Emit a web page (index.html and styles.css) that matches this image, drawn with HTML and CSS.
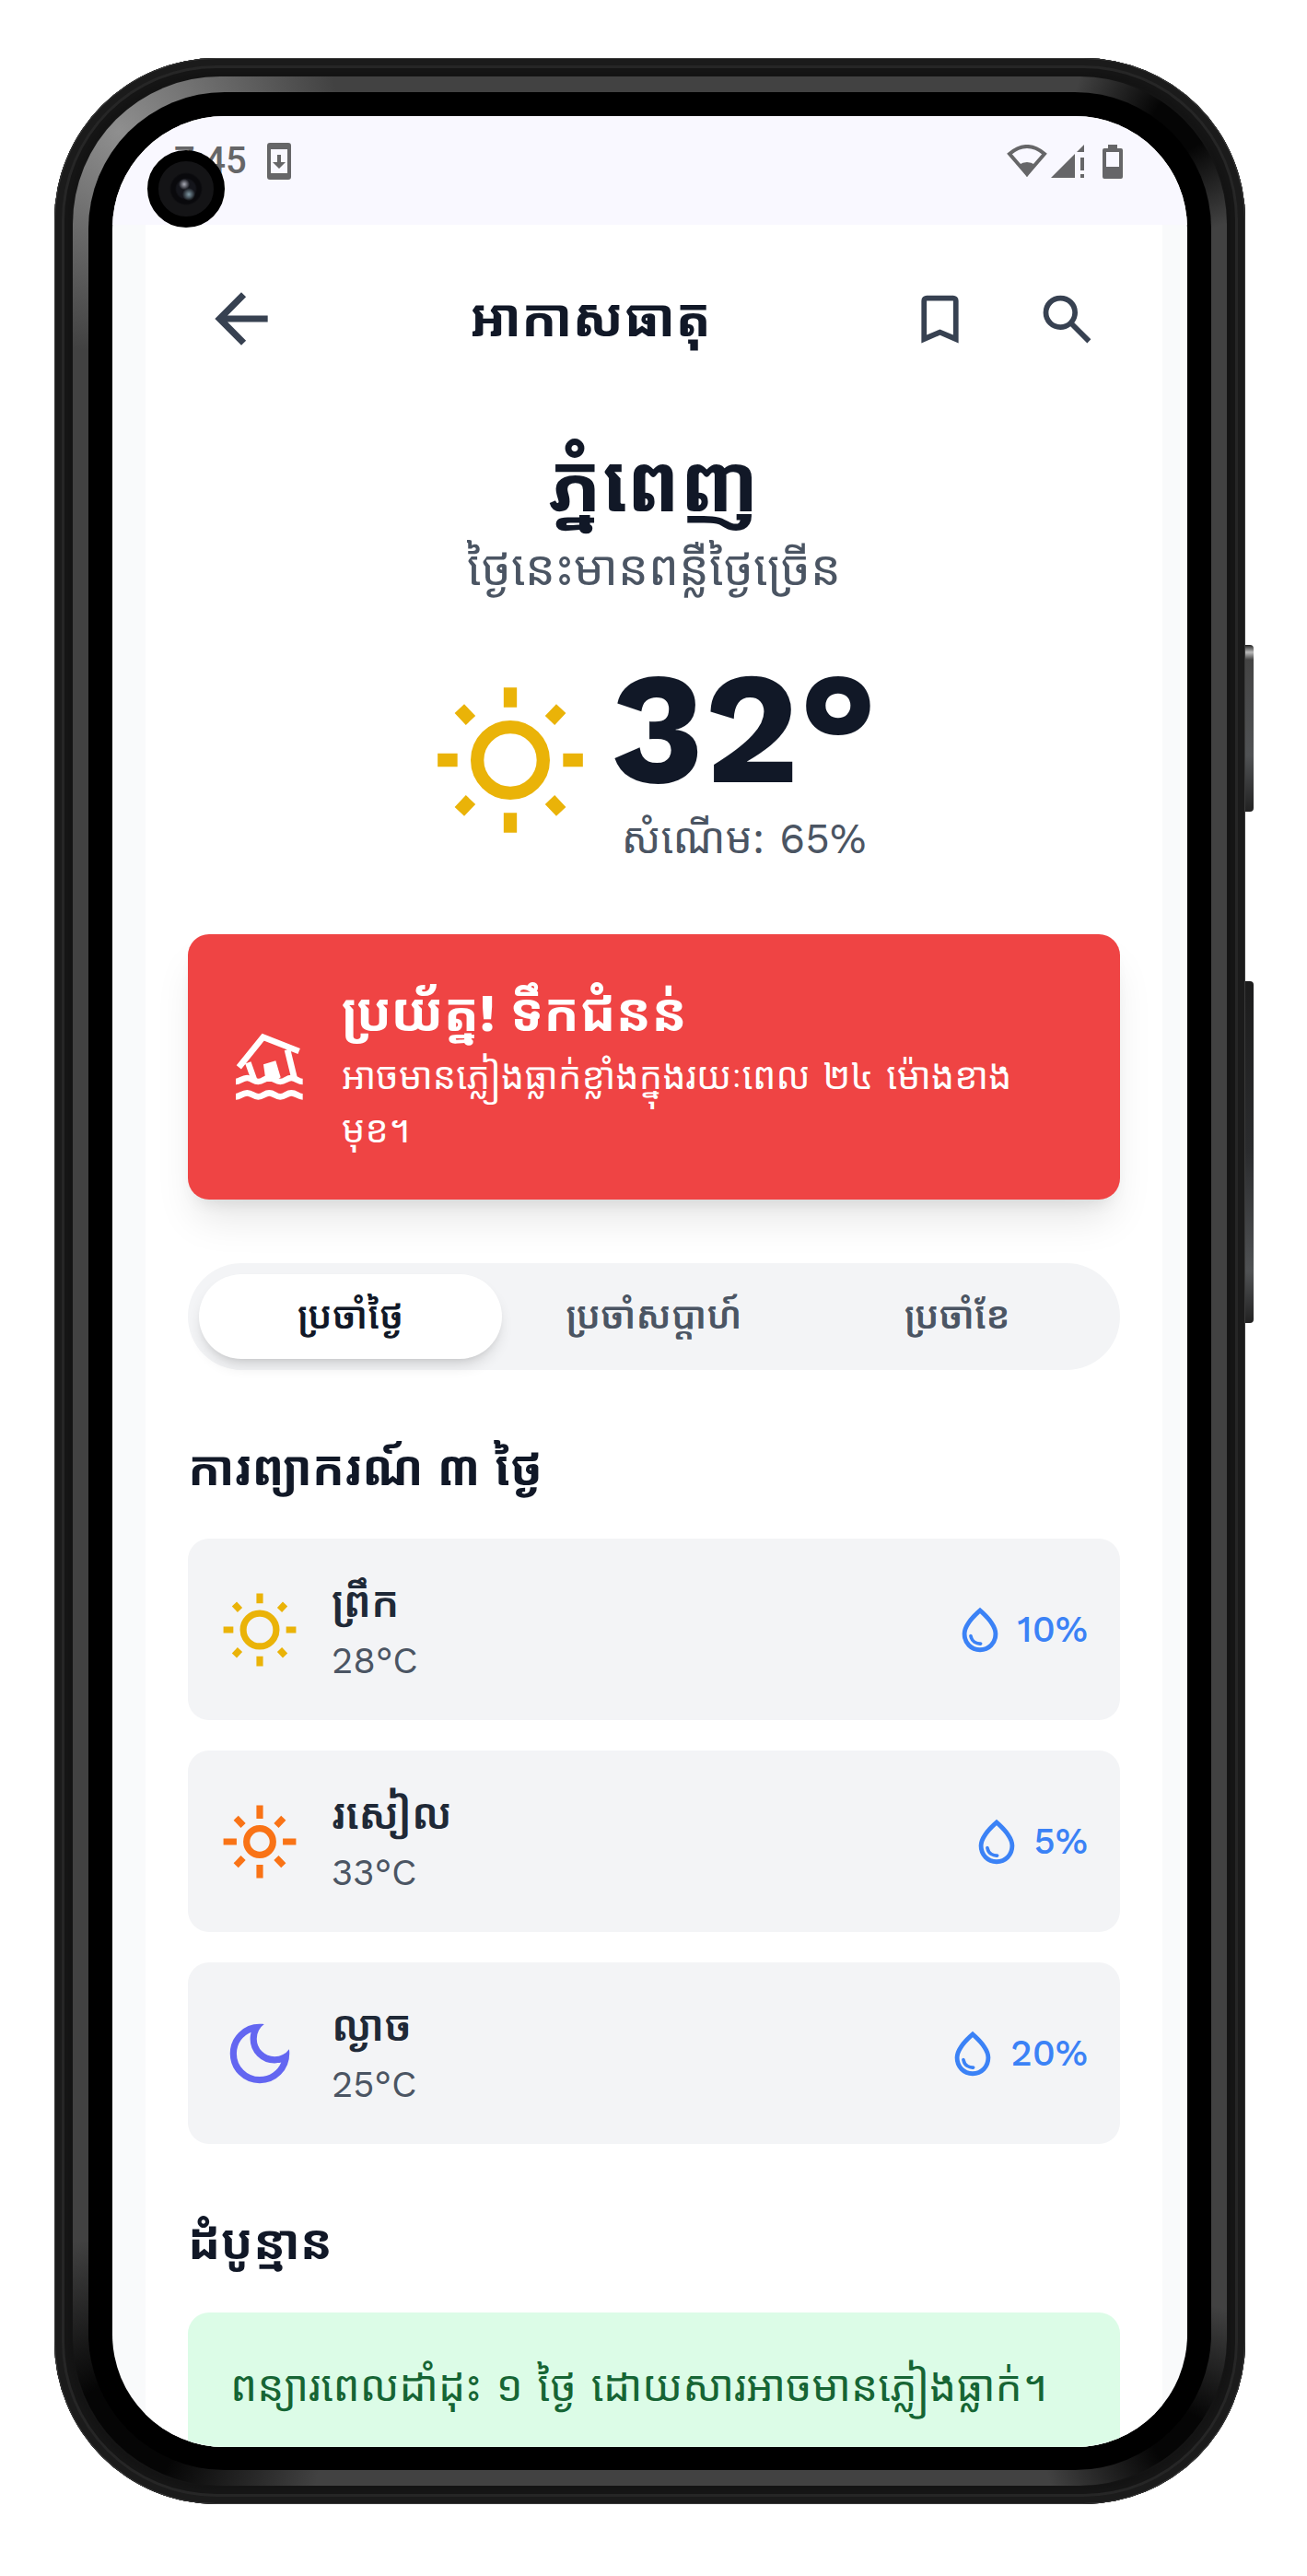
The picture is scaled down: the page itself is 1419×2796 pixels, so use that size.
FILE: index.html
```html
<!DOCTYPE html>
<html lang="km">
<head>
<meta charset="utf-8">
<meta name="viewport" content="width=device-width, initial-scale=1">
<title>អាកាសធាតុ</title>
<link rel="stylesheet" href="styles.css">
</head>
<body>
<svg class="sprite" aria-hidden="true">
  <symbol id="sun" viewBox="0 0 24 24">
    <circle cx="12" cy="12" r="5" fill="none" stroke="currentColor" stroke-width="2"/>
    <path fill="none" stroke="currentColor" stroke-width="2" d="M12 1v3M12 20v3M1 12h3M20 12h3M4.3 4.2l1.7 1.8M19.7 4.2l-1.7 1.8M4.3 19.8l1.7-1.8M19.7 19.8l-1.7-1.8"/>
  </symbol>
  <symbol id="sun-bright" viewBox="0 0 24 24">
    <circle cx="12" cy="12" r="4" fill="none" stroke="currentColor" stroke-width="2"/>
    <path fill="none" stroke="currentColor" stroke-width="2" d="M12 1v4M12 19v4M1 12h4M19 12h4M4.8 4.8l2.2 2.3M19.2 4.8l-2.2 2.3M4.8 19.2l2.2-2.3M19.2 19.2l-2.2-2.3"/>
  </symbol>
  <symbol id="moon" viewBox="0 -960 960 960">
    <path fill="currentColor" d="M480-120q-150 0-255-105T120-480q0-150 105-255t255-105q14 0 27.500 1t26.500 3q-41 29-65.500 75.500T444-660q0 90 63 153t153 63q55 0 101-24.500t75-65.500q2 13 3 26.500t1 27.500q0 150-105 255T480-120Zm0-80q88 0 158-48.500T740-375q-20 5-40 8t-40 3q-123 0-209.500-86.500T364-660q0-20 3-40t8-40q-78 32-126.500 102T200-480q0 116 82 198t198 82Z"/>
  </symbol>
  <symbol id="drop" viewBox="0 -960 960 960">
    <path fill="currentColor" d="M491-200q12-1 20.500-9.500T520-230q0-14-9-22.500t-23-7.500q-41 3-87-22.500T343-375q-2-11-10.500-18t-19.500-7q-14 0-23 10.500t-6 24.500q17 91 80 130t127 35ZM480-80q-137 0-228.500-94T160-408q0-100 79.500-217.500T480-880q161 137 240.500 254.500T800-408q0 140-91.500 234T480-80Zm0-80q104 0 172-70.500T720-408q0-73-60.500-165T480-774Q361-665 300.500-573T240-408q0 107 68 177.500T480-160Z"/>
  </symbol>
</svg>

<div class="phone">
  <span class="side-key side-key-power"></span>
  <span class="side-key side-key-volume"></span>
  <div class="ring">
    <div class="bezel">
      <div class="screen">
        <div class="status-bar">
          <div class="status-group">
            <span class="clock">7:45</span>
            <svg width="26" height="40" viewBox="0 0 26 40"><path fill="#666668" fill-rule="evenodd" d="M3 0h20q3 0 3 3v34q0 3-3 3H3q-3 0-3-3V3q0-3 3-3ZM4 7v26h18V7ZM11 13h4v8h5l-7 7-7-7h5Z"/></svg>
          </div>
          <div class="status-group status-right">
            <svg width="44" height="36" viewBox="0 0 44 36"><path fill="none" stroke="#666668" stroke-width="4" d="M3 10Q22-6 41 10L22 32Z"/><path fill="#666668" d="M13 22Q22 16 31 22L22 35Z"/></svg>
            <svg width="36" height="36" viewBox="0 0 36 36"><path fill="#666668" d="M0 36 26 10v26ZM28 8l8-8v8ZM32 14h4v14h-4ZM32 32h4v4h-4Z"/></svg>
            <svg class="battery" width="22" height="37" viewBox="0 0 22 37"><path fill="#666668" fill-rule="evenodd" d="M6 0h10v4h4q2 0 2 2v29q0 2-2 2H2q-2 0-2-2V6q0-2 2-2h4ZM4 8v16h14V8Z"/></svg>
          </div>
        </div>

        <div class="page">
          <header class="topbar">
            <button class="icon-button" type="button" aria-label="ត្រឡប់"><svg class="icon-back" viewBox="0 -960 960 960"><path fill="currentColor" d="m313-440 224 224-57 56-320-320 320-320 57 56-224 224h487v80H313Z"/></svg></button>
            <h1 class="topbar-title">អាកាសធាតុ</h1>
            <button class="icon-button" type="button" aria-label="រក្សាទុក"><svg class="icon-action" viewBox="0 -960 960 960"><path fill="currentColor" d="M200-120v-640q0-33 23.500-56.500T280-840h400q33 0 56.500 23.500T760-760v640L480-240 200-120Zm80-122 200-86 200 86v-518H280v518Z"/></svg></button>
            <button class="icon-button" type="button" aria-label="ស្វែងរក"><svg class="icon-action" viewBox="0 -960 960 960"><path fill="currentColor" d="M784-120 532-372q-30 24-69 38t-83 14q-109 0-184.500-75.500T120-580q0-109 75.500-184.500T380-840q109 0 184.500 75.500T640-580q0 44-14 83t-38 69l252 252-56 56ZM380-400q75 0 127.500-52.500T560-580q0-75-52.500-127.500T380-760q-75 0-127.500 52.500T200-580q0 75 52.500 127.500T380-400Z"/></svg></button>
          </header>

          <main class="content">
            <section class="hero">
              <h2 class="city">ភ្នំពេញ</h2>
              <p class="condition">ថ្ងៃនេះមានពន្លឺថ្ងៃច្រើន</p>
              <div class="current">
                <svg class="icon-hero"><use href="#sun"/></svg>
                <div>
                  <p class="degrees">32°</p>
                  <p class="humidity">សំណើម: 65%</p>
                </div>
              </div>
            </section>

            <section class="alert">
              <svg class="icon-alert" viewBox="18 27 258 258">
                <g fill="none" stroke="#fff" stroke-width="20">
                  <path d="M46 157 125 59l117 46M76 142l20 56M204 100l23 94"/>
                  <path d="M36 204c14 0 20-12 37-12s20 12 36 12 20-12 36-12 20 12 36 12 20-12 36-12 22 12 37 12M36 253c14 0 20-12 37-12s20 12 36 12 20-12 36-12 20 12 36 12 20-12 36-12 22 12 37 12"/>
                </g>
                <path fill="#fff" d="m126 148 40-12 16 54-18 14h-30Z"/>
              </svg>
              <div>
                <h3 class="alert-title">ប្រយ័ត្ន! ទឹកជំនន់</h3>
                <p class="alert-text">អាចមានភ្លៀងធ្លាក់ខ្លាំងក្នុងរយៈពេល ២៤ ម៉ោងខាងមុខ។</p>
              </div>
            </section>

            <div class="tabs" role="tablist">
              <button class="tab tab-active" type="button" role="tab" aria-selected="true">ប្រចាំថ្ងៃ</button>
              <button class="tab" type="button" role="tab" aria-selected="false">ប្រចាំសប្តាហ៍</button>
              <button class="tab" type="button" role="tab" aria-selected="false">ប្រចាំខែ</button>
            </div>

            <section class="section">
              <h3 class="section-title">ការព្យាករណ៍ ៣ ថ្ងៃ</h3>
              <div class="forecast">
                <article class="row">
                  <svg class="icon-row morning"><use href="#sun"/></svg>
                  <div class="row-text"><p class="row-title">ព្រឹក</p><p class="row-temp">28°C</p></div>
                  <div class="rain"><svg class="icon-drop"><use href="#drop"/></svg><span>10%</span></div>
                </article>
                <article class="row">
                  <svg class="icon-row noon"><use href="#sun-bright"/></svg>
                  <div class="row-text"><p class="row-title">រសៀល</p><p class="row-temp">33°C</p></div>
                  <div class="rain"><svg class="icon-drop"><use href="#drop"/></svg><span>5%</span></div>
                </article>
                <article class="row">
                  <svg class="icon-row night"><use href="#moon"/></svg>
                  <div class="row-text"><p class="row-title">ល្ងាច</p><p class="row-temp">25°C</p></div>
                  <div class="rain"><svg class="icon-drop"><use href="#drop"/></svg><span>20%</span></div>
                </article>
              </div>
            </section>

            <section class="section">
              <h3 class="section-title">ដំបូន្មាន</h3>
              <p class="advice">ពន្យារពេលដាំដុះ ១ ថ្ងៃ ដោយសារអាចមានភ្លៀងធ្លាក់។</p>
            </section>
          </main>
        </div>
        <span class="camera"></span>
      </div>
    </div>
  </div>
</div>
</body>
</html>
```
FILE: styles.css
```css
* { box-sizing: border-box; }

body {
  margin: 0;
  background: #fff;
  color: #111827;
  font-family: "Work Sans", "Noto Sans Khmer", Inter, sans-serif;
}

h1, h2, h3, p { margin: 0; }

button {
  border: 0;
  background: none;
  color: inherit;
  font-family: inherit;
}

svg { display: block; flex: none; }
.sprite { position: absolute; width: 0; height: 0; }

/* Device frame */
.phone {
  position: relative;
  margin: 63px 67px 79px 59px;
  padding: 20px;
  border-radius: 176px;
  background: #141414;
  box-shadow:
    inset 0 0 0 1px #3a3a3a,
    inset 0 0 0 8px #1b1b1b,
    inset 0 0 0 11px #262626,
    inset 0 0 2px 17px #151515;
}

.ring {
  padding: 17px;
  border-radius: 160px;
  background:
    radial-gradient(circle at 50px 60px, #8f8f8f, transparent 240px),
    radial-gradient(circle at calc(100% - 50px) 50px, #050505 30px, transparent 120px),
    radial-gradient(circle at 50px calc(100% - 50px), #050505 60px, transparent 220px),
    radial-gradient(circle at calc(100% - 50px) calc(100% - 50px), #050505 30px, transparent 150px),
    #424242;
}

.bezel {
  padding: 26px 26px 25px;
  border-radius: 148px;
  background: #000;
}

.screen {
  position: relative;
  overflow: hidden;
  border-radius: 122px;
  background: #f9fafb;
}

.side-key {
  position: absolute;
  left: 100%;
  width: 9px;
  border-radius: 0 4px 4px 0;
}

.side-key-power {
  top: 637px;
  height: 181px;
  background: linear-gradient(#222, #bbb 8px, #444 16px, #505254 120px, #222);
}

.side-key-volume {
  top: 1002px;
  height: 371px;
  background: linear-gradient(#1c1c1c, #2b2c2e 50%, #505254 85%, #222);
}

.camera {
  position: absolute;
  top: 37px;
  left: 38px;
  width: 84px;
  height: 84px;
  border: 12px solid #000;
  border-radius: 50%;
  background:
    radial-gradient(circle at 28px 25px, #a9abb5, transparent 6px),
    radial-gradient(circle at 33px 36px, #7f98a3, transparent 7px),
    radial-gradient(circle, #14151b 10px, #09090c 12px, #09090c 16px, #141416 18px);
}

/* Status bar */
.status-bar {
  display: flex;
  justify-content: space-between;
  height: 118px;
  padding: 29px 70px 0 67px;
  background: #f9f8ff;
}

.status-group {
  display: flex;
  align-items: center;
  gap: 22px;
  height: 40px;
}

.status-right { gap: 4px; }
.battery { margin-left: 16px; }

.clock {
  color: #666668;
  font: 500 40px/40px Roboto, sans-serif;
}

/* App */
.page {
  margin: 0 27px 0 36px;
  background: #fff;
}

.topbar {
  display: flex;
  align-items: center;
  padding: 33px 35px;
}

.icon-button {
  display: grid;
  place-items: center;
  width: 138px;
  height: 138px;
  padding: 0;
  color: #374151;
}

.icon-back { width: 86px; height: 86px; }
.icon-action { width: 69px; height: 69px; }

.topbar-title {
  flex: 1;
  text-align: center;
  font-size: 57px;
  line-height: 80px;
  font-weight: 700;
}

.content { padding: 26px 46px 0; }

.hero { text-align: center; }

.city {
  font-size: 86px;
  line-height: 104px;
  font-weight: 700;
}

.condition {
  color: #4b5563;
  font-size: 52px;
  line-height: 80px;
}

.current {
  display: flex;
  align-items: center;
  justify-content: center;
  gap: 23px;
  margin-top: 46px;
}

.icon-hero { width: 172px; height: 172px; color: #eab308; }

.degrees {
  font-size: 172px;
  line-height: 172px;
  font-weight: 700;
}

.humidity {
  color: #4b5563;
  font-size: 46px;
  line-height: 69px;
}

.alert {
  display: flex;
  align-items: center;
  gap: 35px;
  margin-top: 69px;
  padding: 46px;
  border-radius: 23px;
  background: #ef4444;
  color: #fff;
  box-shadow: 0 28px 44px -8px rgb(0 0 0 / 10%), 0 12px 18px -10px rgb(0 0 0 / 10%);
}

.icon-alert { width: 86px; height: 86px; }

.alert-title {
  font-size: 57px;
  line-height: 80px;
  font-weight: 700;
}

.alert-text {
  font-size: 40px;
  line-height: 58px;
}

.tabs {
  display: flex;
  margin-top: 69px;
  padding: 12px;
  border-radius: 58px;
  background: #f3f4f6;
}

.tab {
  flex: 1;
  padding: 17px 0;
  border-radius: 46px;
  color: #4b5563;
  font-size: 40px;
  line-height: 58px;
  font-weight: 600;
}

.tab-active {
  background: #fff;
  color: #111827;
  box-shadow: 0 10px 16px -3px rgb(0 0 0 / 12%), 0 5px 8px -5px rgb(0 0 0 / 12%);
}

.section { margin-top: 68px; }

.section-title {
  font-size: 52px;
  line-height: 80px;
  font-weight: 700;
}

.forecast {
  display: flex;
  flex-direction: column;
  gap: 33px;
  margin-top: 35px;
}

.row {
  display: flex;
  align-items: center;
  gap: 35px;
  padding: 35px;
  border-radius: 23px;
  background: #f3f4f6;
}

.icon-row { width: 86px; height: 86px; }
.morning { color: #eab308; }
.noon { color: #f97316; }
.night { color: #6366f1; }

.row-text { flex: 1; }

.row-title {
  color: #1f2937;
  font-size: 46px;
  line-height: 69px;
  font-weight: 600;
}

.row-temp {
  color: #4b5563;
  font-size: 40px;
  line-height: 58px;
}

.rain {
  display: flex;
  align-items: center;
  gap: 12px;
  color: #3b82f6;
  font-size: 40px;
  line-height: 58px;
  font-weight: 500;
}

.icon-drop { width: 58px; height: 58px; }

.advice {
  margin-top: 35px;
  padding: 46px 46px 31px;
  border-radius: 23px 23px 0 0;
  background: #dcfce7;
  color: #166534;
  font-size: 46px;
  line-height: 69px;
}
```
